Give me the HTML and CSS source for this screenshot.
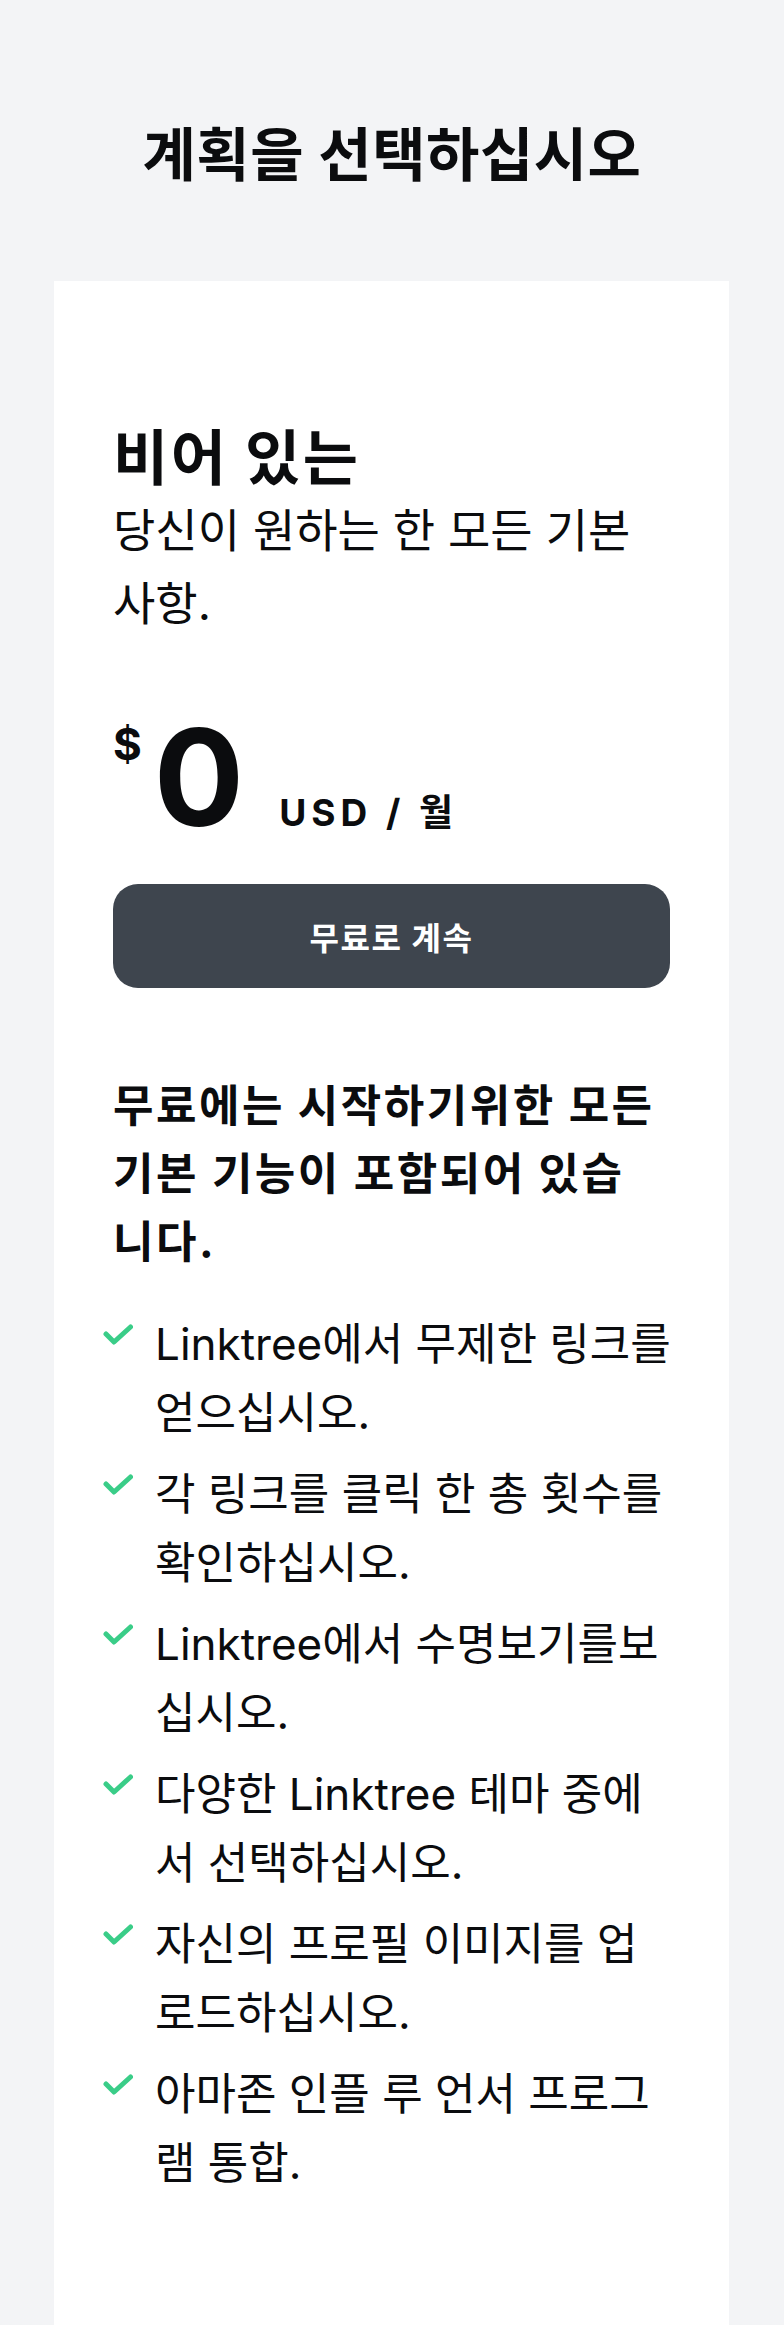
FILE: index.html
```html
<!DOCTYPE html>
<html lang="ko">
<head>
    <meta charset="UTF-8">
    <meta name="viewport" content="width=device-width, initial-scale=1.0">
    <title>계획을 선택하십시오</title>
    <link rel="stylesheet" href="styles.css">
</head>
<body>
    <h1 class="page-title">계획을 선택하십시오</h1>

    <div class="plan-card">
        <h2 class="plan-name">비어 있는</h2>
        <p class="plan-desc">당신이 원하는 한 모든 기본 사항.</p>

        <div class="price">
            <span class="currency">$</span>
            <span class="amount">0</span>
            <span class="period">USD / 월</span>
        </div>

        <button class="plan-button">무료로 계속</button>

        <h3 class="features-title">무료에는 시작하기위한 모든 기본 기능이 포함되어 있습니다.</h3>

        <ul class="features">
            <li>
                <svg class="check" viewBox="0 0 30 21"><path d="M3 10 L11 18 L27.5 3"/></svg>
                <span>Linktree에서 무제한 링크를 얻으십시오.</span>
            </li>
            <li>
                <svg class="check" viewBox="0 0 30 21"><path d="M3 10 L11 18 L27.5 3"/></svg>
                <span>각 링크를 클릭 한 총 횟수를 확인하십시오.</span>
            </li>
            <li>
                <svg class="check" viewBox="0 0 30 21"><path d="M3 10 L11 18 L27.5 3"/></svg>
                <span>Linktree에서 수명보기를보십시오.</span>
            </li>
            <li>
                <svg class="check" viewBox="0 0 30 21"><path d="M3 10 L11 18 L27.5 3"/></svg>
                <span>다양한 Linktree 테마 중에서 선택하십시오.</span>
            </li>
            <li>
                <svg class="check" viewBox="0 0 30 21"><path d="M3 10 L11 18 L27.5 3"/></svg>
                <span>자신의 프로필 이미지를 업로드하십시오.</span>
            </li>
            <li>
                <svg class="check" viewBox="0 0 30 21"><path d="M3 10 L11 18 L27.5 3"/></svg>
                <span>아마존 인플 루 언서 프로그램 통합.</span>
            </li>
        </ul>
    </div>
</body>
</html>
```

FILE: styles.css
```css
body {
    font-family: Inter, "Noto Sans CJK KR", sans-serif;
    background-color: #f3f4f6;
    color: #0b0c0e;
    margin: 0;
}

.page-title {
    font-size: 58px;
    font-weight: 700;
    letter-spacing: 0.5px;
    line-height: 72px;
    text-align: center;
    margin: 0;
    padding-top: 119px;
}

.plan-card {
    background-color: #fff;
    margin: 90px 55px 0 54px;
    padding: 141px 59px 200px 59px;
}

.plan-name {
    font-size: 60px;
    font-weight: 700;
    letter-spacing: 2.5px;
    line-height: 72px;
    margin: 0;
}

.plan-desc {
    font-size: 46px;
    line-height: 73px;
    margin: 0;
}

.price {
    display: flex;
    align-items: baseline;
    margin-top: 70px;
}

.currency {
    align-self: flex-start;
    font-size: 44px;
    font-weight: 700;
    line-height: 1;
    margin: 12px 12px 0 0;
}

.amount {
    font-size: 134px;
    font-weight: 700;
    line-height: 134px;
}

.period {
    font-size: 37px;
    font-weight: 700;
    letter-spacing: 5px;
    margin-left: 35px;
}

.plan-button {
    display: block;
    width: 100%;
    height: 104px;
    margin-top: 40px;
    border: none;
    border-radius: 25px;
    background-color: #3e454e;
    color: #fff;
    font-family: inherit;
    font-size: 32px;
    font-weight: 700;
    letter-spacing: 1.5px;
    cursor: pointer;
}

.features-title {
    font-size: 44px;
    font-weight: 700;
    letter-spacing: 2.5px;
    line-height: 68px;
    margin: 84px 0 0;
    padding-right: 10px;
}

.features {
    list-style: none;
    margin: 34px -4px 0 -10px;
    padding: 0;
}

.features li {
    display: flex;
    gap: 22px;
    font-size: 44px;
    line-height: 69px;
    margin-bottom: 12px;
}

.check {
    flex: none;
    width: 30px;
    height: 21px;
    margin-top: 14px;
    fill: none;
    stroke: #3acd88;
    stroke-width: 5;
    stroke-linecap: round;
    stroke-linejoin: round;
}
```
